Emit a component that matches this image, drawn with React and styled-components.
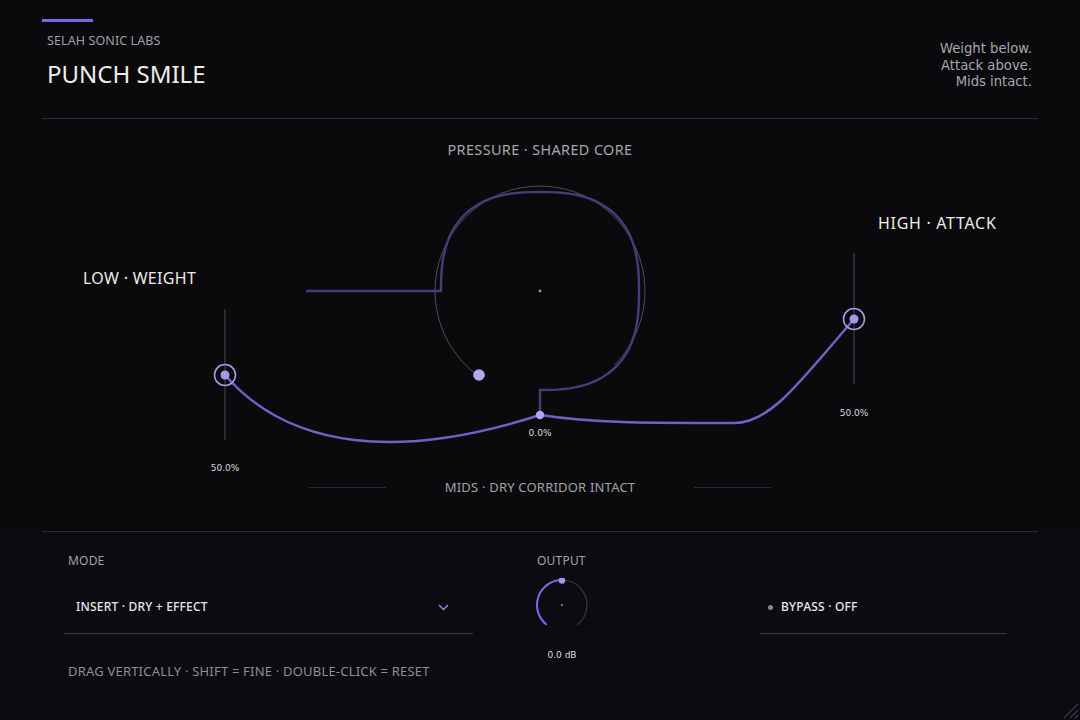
import React from "react";
import styled, { createGlobalStyle } from "styled-components";

const GlobalStyle = createGlobalStyle`
  html, body {
    margin: 0;
    padding: 0;
    background: #0a0a0c;
  }
  * {
    box-sizing: border-box;
  }
`;

const SANS = `"Noto Sans", "Open Sans", sans-serif`;
const MONO = `"DejaVu Sans", "Noto Sans", sans-serif`;

const ACCENT = "#7b66e8";
const LAVENDER = "#a898ec";

const Shell = styled.div`
  position: relative;
  width: 1080px;
  height: 720px;
  overflow: hidden;
  background: #0a0a0c;
  display: flex;
  flex-direction: column;
  font-family: ${SANS};
`;

const Header = styled.header`
  height: 119px;
  margin: 0 42px;
  padding: 19px 6px 0 0;
  border-bottom: 1px solid #2b2a30;
  display: flex;
  justify-content: space-between;
  align-items: flex-start;
`;

const Brand = styled.div`
  display: flex;
  flex-direction: column;
`;

const AccentBar = styled.div`
  width: 51px;
  height: 3px;
  background: ${ACCENT};
`;

const Maker = styled.div`
  margin: 11px 0 0 5px;
  font-size: 12.5px;
  line-height: 16px;
  color: #a19fa7;
  letter-spacing: 0.1px;
`;

const Title = styled.h1`
  margin: 9px 0 0 5px;
  font-size: 24px;
  line-height: 32px;
  font-weight: 400;
  color: #f1eee7;
`;

const Tagline = styled.div`
  margin-top: 22px;
  text-align: right;
  font-family: ${MONO};
  font-size: 13.2px;
  line-height: 16.5px;
  color: #a9a7ae;
`;

const Stage = styled.section`
  height: 413px;
  margin: 0 42px;
  border-bottom: 1px solid #2b2a30;
  display: flex;
  flex-direction: column;
`;

const StageTitle = styled.div`
  margin-top: 22px;
  height: 18px;
  line-height: 18px;
  text-align: center;
  font-size: 14.4px;
  color: #a8a6ad;
  letter-spacing: 0.4px;
`;

const Canvas = styled.div`
  position: relative;
  height: 319px;
  flex: none;
`;

const Plot = styled.svg`
  position: absolute;
  inset: 0;
  display: block;
`;

const BandLabel = styled.div`
  position: absolute;
  left: ${(p) => p.$x}px;
  top: ${(p) => p.$y}px;
  line-height: 20px;
  font-size: 16px;
  color: #eeebe4;
  letter-spacing: ${(p) => p.$spacing || 0.3}px;
  white-space: nowrap;
`;

const NodeValue = styled.div`
  position: absolute;
  left: ${(p) => p.$x}px;
  top: ${(p) => p.$y}px;
  transform: translateX(-50%);
  line-height: 14px;
  font-family: ${MONO};
  font-size: 9px;
  color: #d9d7dd;
  white-space: nowrap;
`;

const StageFooter = styled.div`
  height: 18px;
  margin-bottom: 35px;
  display: flex;
  justify-content: center;
  align-items: center;
  gap: 59px;
`;

const Rule = styled.div`
  width: 78px;
  height: 1px;
  background: #2a292e;
`;

const FooterText = styled.div`
  font-size: 13px;
  line-height: 18px;
  color: #a3a1a8;
  letter-spacing: 0.2px;
`;

const Panel = styled.section`
  flex: 1;
  background: #0c0b11;
  padding: 21px 73px 0 64px;
  display: grid;
  grid-template-columns: 409px 1fr 247px;
  column-gap: 64px;
  align-items: start;
`;

const Column = styled.div`
  display: flex;
  flex-direction: column;
`;

const FieldLabel = styled.div`
  padding-left: ${(p) => (p.$inset ? 4 : 0)}px;
  font-size: 12px;
  line-height: 16px;
  color: #a4a2a9;
  letter-spacing: 0.2px;
`;

const FieldRow = styled.div`
  margin-top: ${(p) => p.$top || 13}px;
  padding: 17px 24px 18px ${(p) => p.$left}px;
  border-bottom: 1px solid #3a3940;
  display: flex;
  align-items: center;
  justify-content: space-between;
  line-height: 16px;
`;

const FieldText = styled.span`
  font-size: 12px;
  color: #e8e6ec;
  letter-spacing: 0.2px;
  font-weight: 500;
`;

const Hint = styled.div`
  margin-top: 29px;
  padding-left: 4px;
  font-size: 13px;
  line-height: 16px;
  color: #908e96;
  letter-spacing: 0.2px;
  white-space: nowrap;
`;

const KnobWrap = styled.div`
  margin: 9px 0 0 -2px;
  width: 54px;
  display: flex;
  flex-direction: column;
  align-items: center;
`;

const KnobValue = styled.div`
  margin-top: 16px;
  font-family: ${MONO};
  font-size: 9px;
  line-height: 14px;
  color: #dcdae0;
  white-space: nowrap;
`;

const BypassInner = styled.div`
  display: flex;
  align-items: center;
  gap: 8px;
`;

const StatusDot = styled.span`
  width: 5px;
  height: 5px;
  border-radius: 50%;
  background: #8b8991;
`;

const Grip = styled.svg`
  position: absolute;
  right: 1px;
  bottom: 1px;
`;

const rad = (d) => (d * Math.PI) / 180;
const polar = (cx, cy, r, deg) => [cx + r * Math.cos(rad(deg)), cy + r * Math.sin(rad(deg))];

function arcPath(cx, cy, r, from, to) {
  const [x0, y0] = polar(cx, cy, r, from);
  const [x1, y1] = polar(cx, cy, r, to);
  const large = to - from > 180 ? 1 : 0;
  return `M ${x0.toFixed(2)} ${y0.toFixed(2)} A ${r} ${r} 0 ${large} 1 ${x1.toFixed(2)} ${y1.toFixed(2)}`;
}

function squircle(cx, cy, a, b, n, from, to, steps = 90) {
  const pts = [];
  for (let i = 0; i <= steps; i++) {
    const t = rad(from + ((to - from) * i) / steps);
    const c = Math.cos(t);
    const s = Math.sin(t);
    const x = cx + a * Math.sign(c) * Math.pow(Math.abs(c), 2 / n);
    const y = cy + b * Math.sign(s) * Math.pow(Math.abs(s), 2 / n);
    pts.push(`${x.toFixed(2)} ${y.toFixed(2)}`);
  }
  return pts.join(" L ");
}

const pressurePath = `M 306 291 L ${squircle(540, 291, 99, 99, 2.6, 180, 450)} L 540 415`;
const responsePath =
  "M 225 375 C 290 450, 400 460, 540 415 C 600 424, 660 423, 735 423 C 770 423, 800 382, 854 319";

function Node({ x, y, top, bottom }) {
  return (
    <g>
      <line x1={x} y1={top} x2={x} y2={bottom} stroke="#4a4950" strokeWidth="1" />
      <circle cx={x} cy={y} r="10.5" fill="none" stroke={LAVENDER} strokeWidth="1.6" />
      <circle cx={x} cy={y} r="4.5" fill={LAVENDER} />
    </g>
  );
}

function ResponsePlot() {
  return (
    <Plot width="996" height="319" viewBox="42 159 996 319">
      <path d={arcPath(540, 291, 105, 126, 405)} fill="none" stroke="#4e4d54" strokeWidth="1" />
      <path d={pressurePath} fill="none" stroke="#463c78" strokeWidth="2.4" strokeLinejoin="miter" />
      <circle cx="540" cy="291" r="1.4" fill="#9a98a0" />
      <circle cx="479" cy="375" r="5.8" fill="#b3a6f2" />
      <path d={responsePath} fill="none" stroke="#7261c4" strokeWidth="2.5" strokeLinecap="round" />
      <Node x={225} y={375} top={309} bottom={440} />
      <Node x={854} y={319} top={253} bottom={384} />
      <circle cx="540" cy="415" r="4.2" fill="#b0a3f0" />
    </Plot>
  );
}

function Knob() {
  return (
    <svg width="54" height="54" viewBox="0 0 54 54">
      <path d={arcPath(27, 27, 25, 128, 412)} fill="none" stroke="#3a3940" strokeWidth="1.2" />
      <path d={arcPath(27, 27, 25, 128, 270)} fill="none" stroke={ACCENT} strokeWidth="2" />
      <circle cx="27" cy="2.5" r="3.2" fill={LAVENDER} />
      <circle cx="27" cy="27" r="1.1" fill="#8f8d95" />
    </svg>
  );
}

function Chevron() {
  return (
    <svg width="11" height="7" viewBox="0 0 11 7">
      <path d="M1 1 L5.5 5.5 L10 1" fill="none" stroke="#9c8ef0" strokeWidth="1.3" />
    </svg>
  );
}

export default function App() {
  return (
    <>
      <GlobalStyle />
      <Shell>
        <Header>
          <Brand>
            <AccentBar />
            <Maker>SELAH SONIC LABS</Maker>
            <Title>PUNCH SMILE</Title>
          </Brand>
          <Tagline>
            Weight below.
            <br />
            Attack above.
            <br />
            Mids intact.
          </Tagline>
        </Header>

        <Stage>
          <StageTitle>PRESSURE · SHARED CORE</StageTitle>
          <Canvas>
            <ResponsePlot />
            <BandLabel $x={41} $y={109} $spacing={0}>LOW · WEIGHT</BandLabel>
            <BandLabel $x={836} $y={54} $spacing={0.7}>HIGH · ATTACK</BandLabel>
            <NodeValue $x={183} $y={302}>50.0%</NodeValue>
            <NodeValue $x={498} $y={267}>0.0%</NodeValue>
            <NodeValue $x={812} $y={247}>50.0%</NodeValue>
          </Canvas>
          <StageFooter>
            <Rule />
            <FooterText>MIDS · DRY CORRIDOR INTACT</FooterText>
            <Rule />
          </StageFooter>
        </Stage>

        <Panel>
          <Column>
            <FieldLabel $inset>MODE</FieldLabel>
            <FieldRow $left={12}>
              <FieldText>INSERT · DRY + EFFECT</FieldText>
              <Chevron />
            </FieldRow>
            <Hint>DRAG VERTICALLY · SHIFT = FINE · DOUBLE-CLICK = RESET</Hint>
          </Column>

          <Column>
            <FieldLabel>OUTPUT</FieldLabel>
            <KnobWrap>
              <Knob />
              <KnobValue>0.0 dB</KnobValue>
            </KnobWrap>
          </Column>

          <Column>
            <FieldRow $top={29} $left={8}>
              <BypassInner>
                <StatusDot />
                <FieldText>BYPASS · OFF</FieldText>
              </BypassInner>
            </FieldRow>
          </Column>
        </Panel>

        <Grip width="16" height="16" viewBox="0 0 16 16">
          <path d="M15 1 L1 15 M15 7 L7 15 M15 12 L12 15" stroke="#3b3656" strokeWidth="1.2" />
        </Grip>
      </Shell>
    </>
  );
}
